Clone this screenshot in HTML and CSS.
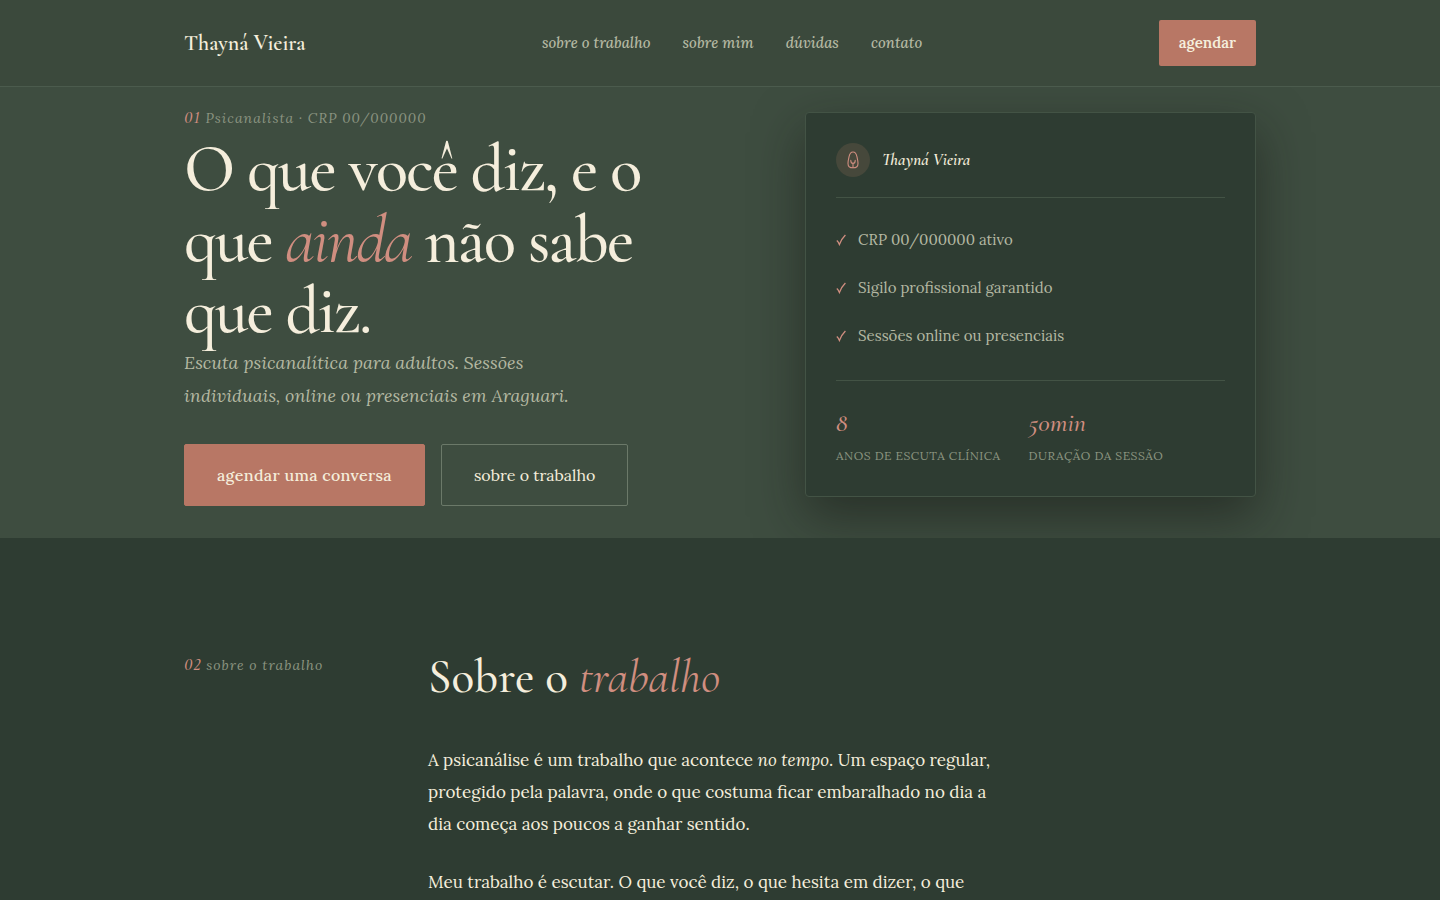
FILE: index.html
```html
<!DOCTYPE html>
<html lang="pt-BR">
<head>
    <meta charset="UTF-8">
    <meta name="viewport" content="width=device-width, initial-scale=1.0">
    <title>Thayná Vieira</title>
    <link rel="stylesheet" href="styles.css">
</head>
<body>
    <header class="site-header">
        <div class="container header-inner">
            <a class="logo" href="#inicio">Thayná Vieira</a>
            <nav class="nav">
                <a href="#trabalho">sobre o trabalho</a>
                <a href="#sobre">sobre mim</a>
                <a href="#duvidas">dúvidas</a>
                <a href="#contato">contato</a>
            </nav>
            <a class="btn-small" href="#contato">agendar</a>
        </div>
    </header>

    <main>
        <section class="hero" id="inicio">
            <div class="container hero-grid">
                <div class="hero-text">
                    <p class="eyebrow"><span class="num">01</span> Psicanalista · CRP 00/000000</p>
                    <h1>O que você diz, e o que <em>ainda</em> não sabe que diz.</h1>
                    <p class="lead">Escuta psicanalítica para adultos. Sessões individuais, online ou presenciais em Araguari.</p>
                    <div class="actions">
                        <a class="btn btn-primary" href="#contato">agendar uma conversa</a>
                        <a class="btn btn-outline" href="#trabalho">sobre o trabalho</a>
                    </div>
                </div>

                <aside class="card">
                    <div class="card-head">
                        <span class="avatar">
                            <svg width="18" height="18" viewBox="0 0 18 18" fill="none" stroke="currentColor" stroke-width="1.1" stroke-linecap="round" stroke-linejoin="round">
                                <path d="M9 1C6.6 1 5.6 3 5 5.8C4.4 8.4 4 10.2 4 12.4C4 15.4 5.4 16.8 9 16.8S14 15.4 14 12.4C14 10.2 13.6 8.4 13 5.8C12.4 3 11.4 1 9 1Z"/>
                                <path d="M9 16.6V12.4M6.8 9.4C6.8 11.2 7.6 12.4 9 12.4S11.2 11.2 11.2 9.4"/>
                            </svg>
                        </span>
                        <span class="card-name">Thayná Vieira</span>
                    </div>
                    <ul class="checks">
                        <li><svg class="check" viewBox="0 0 10 12"><path d="M.8 6.6Q2.4 8 3.4 10.4Q5.4 5 9.4 1"/></svg>CRP 00/000000 ativo</li>
                        <li><svg class="check" viewBox="0 0 10 12"><path d="M.8 6.6Q2.4 8 3.4 10.4Q5.4 5 9.4 1"/></svg>Sigilo profissional garantido</li>
                        <li><svg class="check" viewBox="0 0 10 12"><path d="M.8 6.6Q2.4 8 3.4 10.4Q5.4 5 9.4 1"/></svg>Sessões online ou presenciais</li>
                    </ul>
                    <div class="stats">
                        <div class="stat">
                            <span class="stat-value">8</span>
                            <span class="stat-label">anos de escuta clínica</span>
                        </div>
                        <div class="stat">
                            <span class="stat-value">50min</span>
                            <span class="stat-label">duração da sessão</span>
                        </div>
                    </div>
                </aside>
            </div>
        </section>

        <section class="work" id="trabalho">
            <div class="container work-grid">
                <p class="eyebrow"><span class="num">02</span> sobre o trabalho</p>
                <div class="work-body">
                    <h2>Sobre o <em>trabalho</em></h2>
                    <p>A psicanálise é um trabalho que acontece <em>no tempo</em>. Um espaço regular, protegido pela palavra, onde o que costuma ficar embaralhado no dia a dia começa aos poucos a ganhar sentido.</p>
                    <p>Meu trabalho é escutar. O que você diz, o que hesita em dizer, o que</p>
                </div>
            </div>
        </section>
    </main>
</body>
</html>
```
FILE: styles.css
```css
:root {
    --moss: #3e4d40;
    --header: #3b493c;
    --deep: #2e3c32;
    --cream: #f5eedc;
    --muted: #b4b8a2;
    --faint: #8b9480;
    --terra: #b87765;
    --rose: #d08e80;
    --line: #4b5b4d;
    --line-soft: #435345;
    --display: "Cormorant Garamond", "Liberation Serif", serif;
    --text: "Lora", "Liberation Serif", serif;
}

* {
    margin: 0;
    padding: 0;
    box-sizing: border-box;
}

body {
    background: var(--deep);
    color: var(--cream);
    font-family: var(--text);
    font-size: 17px;
    line-height: 32px;
}

a {
    color: inherit;
    text-decoration: none;
}

.container {
    max-width: 1200px;
    margin: 0 auto;
    padding: 0 64px;
}

/* header */
.site-header {
    position: sticky;
    top: 0;
    z-index: 10;
    background: var(--header);
    border-bottom: 1px solid var(--line);
}

.header-inner {
    display: flex;
    align-items: center;
    justify-content: space-between;
    padding-top: 20px;
    padding-bottom: 20px;
}

.logo {
    font-family: var(--display);
    font-size: 22px;
    font-weight: 600;
    font-variant-ligatures: none;
}

.nav {
    display: flex;
    gap: 32px;
    color: var(--muted);
    font-size: 15px;
    font-style: italic;
    font-weight: 500;
}

.btn-small {
    padding: 11px 20px;
    border-radius: 2px;
    background: var(--terra);
    font-size: 15px;
    font-weight: 600;
    line-height: 24px;
}

/* hero */
.hero {
    overflow: hidden;
    padding: 16px 0 32px;
    background: var(--moss);
}

.hero-grid {
    display: grid;
    grid-template-columns: 6fr 5fr;
    gap: 80px;
    align-items: center;
}

.eyebrow {
    color: var(--faint);
    font-size: 14px;
    font-style: italic;
    letter-spacing: 1px;
    line-height: 30px;
}

.num {
    color: var(--rose);
    font-family: var(--display);
    font-size: 18px;
    font-weight: 500;
    line-height: 1;
    font-variant-numeric: lining-nums;
}

h1 {
    font-family: var(--display);
    font-size: 67px;
    font-weight: 500;
    letter-spacing: -2px;
    line-height: 71px;
}

h1 em,
h2 em {
    color: var(--rose);
    font-weight: 400;
}

.lead {
    max-width: 440px;
    margin-bottom: 32px;
    color: var(--muted);
    font-size: 18px;
    font-style: italic;
    line-height: 33px;
}

.actions {
    display: flex;
    gap: 16px;
}

.btn {
    padding: 14px 32px;
    border: 1px solid transparent;
    border-radius: 2px;
    font-size: 16px;
}

.btn-primary {
    background: var(--terra);
    border-color: var(--terra);
    font-weight: 500;
    letter-spacing: 0.02em;
}

.btn-outline {
    border-color: #6b7969;
}

/* card */
.card {
    padding: 30px;
    border: 1px solid var(--line-soft);
    border-radius: 4px;
    background: var(--deep);
    box-shadow: 0 20px 50px rgba(20, 22, 18, 0.5);
}

.card-head {
    display: flex;
    align-items: center;
    gap: 12px;
    padding-bottom: 20px;
    border-bottom: 1px solid var(--line-soft);
}

.avatar {
    display: flex;
    align-items: center;
    justify-content: center;
    width: 34px;
    height: 34px;
    border-radius: 50%;
    background: #46483b;
    color: var(--rose);
}

.card-name {
    font-family: var(--display);
    font-size: 17px;
    font-style: italic;
    font-weight: 600;
}

.checks {
    padding: 18px 0 20px;
    border-bottom: 1px solid var(--line-soft);
    color: var(--muted);
    font-size: 15px;
    line-height: 48px;
    list-style: none;
}

.checks li {
    display: flex;
    align-items: center;
    gap: 12px;
}

.check {
    width: 10px;
    height: 12px;
    fill: none;
    stroke: var(--rose);
    stroke-width: 1.3;
}

.stats {
    display: flex;
    gap: 28px;
    padding-top: 24px;
}

.stat {
    display: flex;
    flex-direction: column;
    gap: 5px;
}

.stat-value {
    color: var(--rose);
    font-family: var(--display);
    font-size: 26px;
    font-style: italic;
    font-weight: 500;
    line-height: 36px;
}

.stat-label {
    color: var(--faint);
    font-size: 12px;
    letter-spacing: 0.5px;
    line-height: 20px;
    text-transform: uppercase;
}

/* about the work */
.work {
    padding: 112px 0 0;
}

.work-grid {
    display: grid;
    grid-template-columns: 180px 1fr;
    gap: 64px;
}

.work-body {
    max-width: 580px;
}

h2 {
    margin-bottom: 40px;
    font-family: var(--display);
    font-size: 47px;
    font-weight: 500;
    line-height: 54px;
}

.work-body p + p {
    margin-top: 26px;
}

@media (max-width: 900px) {
    .container {
        padding-left: 24px;
        padding-right: 24px;
    }

    .nav {
        display: none;
    }

    .hero-grid,
    .work-grid {
        grid-template-columns: 1fr;
        gap: 32px;
    }

    .actions,
    .stats {
        flex-wrap: wrap;
    }
}
```
